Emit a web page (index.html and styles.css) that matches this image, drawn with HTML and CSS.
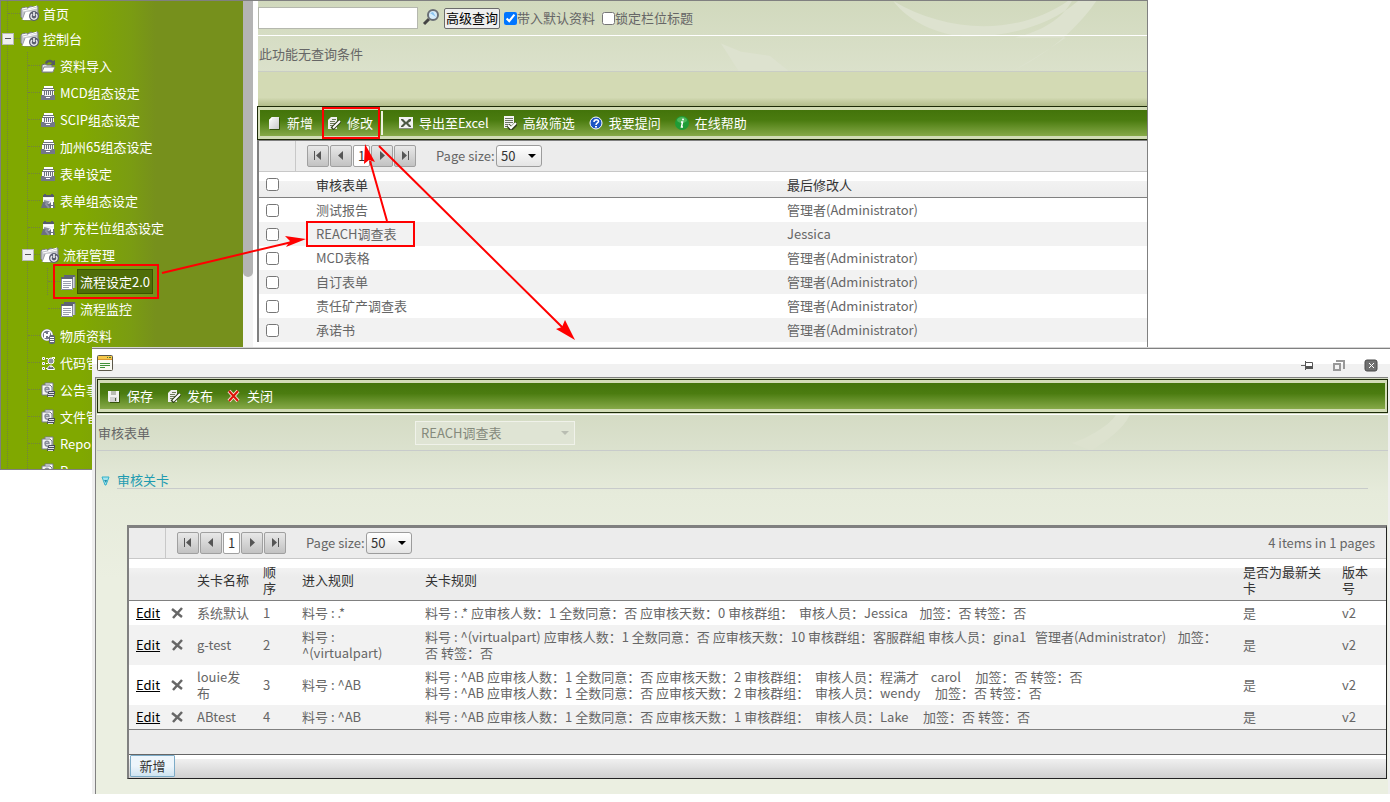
FILE: index.html
```html
<!DOCTYPE html>
<html lang="zh-CN">
<head>
<meta charset="utf-8">
<title>流程设定2.0</title>
<link rel="stylesheet" href="styles.css">
</head>
<body>
<svg class="defs" aria-hidden="true">
  <defs>
    <linearGradient id="paper" x1="0" y1="0" x2="1" y2="1"><stop offset="0" stop-color="#fff"/><stop offset="1" stop-color="#c9c9c9"/></linearGradient>
    <symbol id="i-folder" viewBox="0 0 20 18">
      <path d="M1 5l1-1 4-1 1 1 4-2 2 1 5-1v6l1 3-6 5H4L1 13z" fill="#c3c5cb" stroke="#7c8089" stroke-width="1"/>
      <path d="M2 5l5-1M8 5l9-3M3 7l14-3" stroke="#fff" fill="none"/>
      <path d="M2 16l3-8 12-1-2 9z" fill="#fff"/>
      <path d="M2 16l3-8" stroke="#9a9da5"/>
      <circle cx="14" cy="12" r="5" fill="#5b5f70"/><path d="M12 10a3 3 0 1 0 4 0" fill="none" stroke="#e8e8ee" stroke-width="1.500"/><path d="M14 8v4" stroke="#fff" stroke-width="1.500"/>
    </symbol>
    <symbol id="i-import" viewBox="0 0 16 16">
      <path d="M2 7l3-1 2 1h5v7H2z" fill="#dfe2e6" stroke="#6c6f75"/>
      <path d="M2 14l2-5h11l-2 5z" fill="#fff" stroke="#83868b"/>
      <path d="M5 5c1-4 6-4 8-2l2-1v5h-5l2-2c-2-1-4-1-5 1z" fill="#555a64"/>
    </symbol>
    <symbol id="i-form" viewBox="0 0 16 16">
      <path d="M4 1h9v2H4zM3 4h11v1H3z" fill="#fff"/><path d="M3 3h11v1H3zM2 5h13v1H2z" fill="#6d7180"/><path d="M2 6h12v5H2z" fill="#f7f7f7"/>
      <path d="M4.500 6v4M6.500 6v4M8.500 6v4M10.500 6v4M12.500 6v4" stroke="#6d7180"/><path d="M1 10h3l1 1h6l1-1h3v5H1z" fill="#73778a"/><path d="M6 12h4v1H6z" fill="#fff"/>
    </symbol>
    <symbol id="i-formedit" viewBox="0 0 16 16">
      <path d="M3 3h11v8H3z" fill="#f2f2f4"/><path d="M3 3h11" stroke="#565b6b" stroke-width="2"/><path d="M5 1v2M12 1v2" stroke="#565b6b" stroke-width="2"/><path d="M4 5h9v1H4z" fill="#fff"/>
      <path d="M1 15l2-6h3l3 2 2-2h3l1 6z" fill="#6b6f82"/><path d="M4 8l4 1-2 2 3 4" fill="none" stroke="#8e92a2" stroke-width="2"/><path d="M12 8v4M12 13v2" stroke="#fff" stroke-width="2"/>
    </symbol>
    <symbol id="i-list" viewBox="0 0 16 16">
      <path d="M4 1h11v13H4z" fill="#d5d7de"/><path d="M4 1h11v2H4z" fill="#5f6474"/><path d="M15 2v12" stroke="#7c8090"/>
      <path d="M1 4h12v12H1z" fill="#fff"/><path d="M1 3h12v2H1z" fill="#5f6474"/><path d="M1.500 5v10.500h11V5" fill="none" stroke="#85899a"/><path d="M3 7.500h8M3 9.500h8M3 11.500h8M3 13.500h6" stroke="#9a9eab"/>
    </symbol>
    <symbol id="i-material" viewBox="0 0 16 16">
      <circle cx="7" cy="7" r="6" fill="#73778a"/><circle cx="7" cy="7" r="5" fill="none" stroke="#fff" stroke-width="1.500"/><path d="M5 5v5M9 4v5M5 7h4" stroke="#fff" stroke-width="2"/>
      <rect x="9" y="7" width="6" height="9" rx="2" fill="#62677a"/><path d="M10 9.500h4M10 11.500h4M10 13.500h4" stroke="#fff"/>
    </symbol>
    <symbol id="i-code" viewBox="0 0 16 16">
      <path d="M2.500 2.500h2v2h-2zM2.500 7.500h2v2h-2zM2.500 12.500h2v2h-2z" fill="#62677a" stroke="#fff"/><path d="M6 3.500h2M6 8.500h2M6 13.500h1M14.500 2v2M12 2.500h3" stroke="#fff" fill="none"/>
      <circle cx="11" cy="6" r="3" fill="#8b8fa0" stroke="#fff"/><path d="M7.500 14.500c0-5 6-5 7 0z" fill="#62677a" stroke="#fff"/><path d="M10 11l1 2 1-2" fill="#fff"/>
    </symbol>
    <symbol id="i-docs" viewBox="0 0 16 16">
      <path d="M5 1h8v9H5z" fill="#fff" stroke="#777b89"/><path d="M2 3h8l2 2v8H2z" fill="#f6f6f6" stroke="#777b89"/><path d="M5 7.500h4c0-3-4-3-4 0 0 3 3 3 4 2" fill="none" stroke="#8a8e9c" stroke-width="1.500"/>
      <path d="M8 10l1-1h6v2l-1 4H7z" fill="#4a4e5e"/><path d="M9 10.500h5M8 12.500h6M8 14.500h5" stroke="#dfe0e5"/>
    </symbol>
    <symbol id="i-new" viewBox="0 0 14 14"><path d="M5 1h7v12H2V4z" fill="url(#paper)"/><path d="M2 4h3V1" fill="#fff"/><path d="M12.500 2v11.500H3" fill="none" stroke="#34510c"/></symbol>
    <symbol id="i-edit" viewBox="0 0 14 14">
      <path d="M4 1h6v12H1V4z" fill="#efefef"/><path d="M3 5.500h5M3 7.500h5M3 9.500h3M5 3.500h4" stroke="#6d7b58"/><path d="M5 13l8-8" stroke="#33431c" stroke-width="4"/><path d="M6 12l7-7" stroke="#fff" stroke-width="2"/>
    </symbol>
    <symbol id="i-excel" viewBox="0 0 14 14"><path d="M0 1h14v12H0z" fill="#f2f2f2"/><path d="M2 3h2l3 3 3-3h2v2L9 7l3 3v1h-2L7 8l-3 3H2v-1l3-3-3-3z" fill="#4d5945"/><path d="M0 12.500h14" stroke="#8a8f84"/></symbol>
    <symbol id="i-filter" viewBox="0 0 14 14"><path d="M1 0h10v12H1z" fill="#f3f3f3"/><path d="M2 2.500h8M2 4.500h8M2 6.500h8M2 8.500h4M2 10.500h3" stroke="#6c7562"/><path d="M5 9l3 4 6-6" fill="none" stroke="#33431c" stroke-width="4"/><path d="M5 9l3 3 5-5" fill="none" stroke="#fff" stroke-width="2"/></symbol>
    <symbol id="i-help" viewBox="0 0 14 14"><circle cx="7" cy="7" r="6" fill="#1d56c4" stroke="#fff" stroke-width="1"/><path d="M5 6c0-3 4.500-3 4.500-.5C9.500 7 7 7 7 9" fill="none" stroke="#fff" stroke-width="1.500"/><path d="M6 10h2v1.500H6z" fill="#fff"/></symbol>
    <symbol id="i-info" viewBox="0 0 14 14"><circle cx="7" cy="7" r="7" fill="#1f9c36"/><ellipse cx="7" cy="4" rx="5" ry="3" fill="#4db75a"/><path d="M6 6h1.500l-1 5H8" fill="none" stroke="#fff" stroke-width="1.500"/><circle cx="8" cy="3.500" r="1" fill="#fff"/></symbol>
    <symbol id="i-save" viewBox="0 0 14 14"><path d="M1 2h11v11H2l-1-1z" fill="#f1f1f1"/><path d="M4 2h5v4H4z" fill="#b9bcb4"/><path d="M3 8h7v5H3z" fill="#d2d2d2"/><path d="M8 9h1v3H8z" fill="#4e5b3c"/><path d="M12.500 3v10.500H3" fill="none" stroke="#34510c"/></symbol>
    <symbol id="i-redx" viewBox="0 0 14 14"><path d="M2 2l9 10M11 2L2 12" stroke="#f6e3d8" stroke-width="4"/><path d="M2 2l9 10M11 2L2 12" stroke="#dd1408" stroke-width="2"/></symbol>
    <symbol id="i-first" viewBox="0 0 20 20"><path d="M6 5h1v9H6zM13 5v9L8 9.500z" fill="#555"/></symbol>
    <symbol id="i-prev" viewBox="0 0 20 20"><path d="M12 5v9L7 9.500z" fill="#555"/></symbol>
    <symbol id="i-next" viewBox="0 0 20 20"><path d="M8 5v9l5-4.500z" fill="#555"/></symbol>
    <symbol id="i-last" viewBox="0 0 20 20"><path d="M13 5h1v9h-1zM7 5v9l5-4.500z" fill="#555"/></symbol>
    <symbol id="i-del" viewBox="0 0 14 14"><path d="M2 3l10 8M12 2L3 12" stroke="#676767" stroke-width="2.500"/></symbol>
    <symbol id="i-down" viewBox="0 0 8 4"><path d="M0 0h8L4 4z"/></symbol>
  </defs>
</svg>

<div class="desktop">
  <div class="app">
    <nav class="sidebar">
      <ul class="tree">
        <li><a class="node" href="#"><i class="dash root"></i><svg class="folder"><use href="#i-folder"/></svg><span>首页</span></a></li>
        <li>
          <div class="node open"><button class="toggle" type="button" aria-label="折叠"></button><i class="dash"></i><svg class="folder"><use href="#i-folder"/></svg><span>控制台</span></div>
          <ul class="branch">
            <li><a class="node" href="#"><i class="dash"></i><svg><use href="#i-import"/></svg><span>资料导入</span></a></li>
            <li><a class="node" href="#"><i class="dash"></i><svg><use href="#i-form"/></svg><span>MCD组态设定</span></a></li>
            <li><a class="node" href="#"><i class="dash"></i><svg><use href="#i-form"/></svg><span>SCIP组态设定</span></a></li>
            <li><a class="node" href="#"><i class="dash"></i><svg><use href="#i-form"/></svg><span>加州65组态设定</span></a></li>
            <li><a class="node" href="#"><i class="dash"></i><svg><use href="#i-form"/></svg><span>表单设定</span></a></li>
            <li><a class="node" href="#"><i class="dash"></i><svg><use href="#i-formedit"/></svg><span>表单组态设定</span></a></li>
            <li><a class="node" href="#"><i class="dash"></i><svg><use href="#i-formedit"/></svg><span>扩充栏位组态设定</span></a></li>
            <li>
              <div class="node open"><button class="toggle" type="button" aria-label="折叠"></button><i class="dash"></i><svg class="folder"><use href="#i-folder"/></svg><span>流程管理</span></div>
              <ul class="twig">
                <li><a class="node" href="#"><i class="dash"></i><svg><use href="#i-list"/></svg><span class="selected">流程设定2.0</span></a></li>
                <li><a class="node" href="#"><i class="dash"></i><svg><use href="#i-list"/></svg><span>流程监控</span></a></li>
              </ul>
            </li>
            <li><a class="node" href="#"><i class="dash"></i><svg><use href="#i-material"/></svg><span>物质资料</span></a></li>
            <li><a class="node" href="#"><i class="dash"></i><svg><use href="#i-code"/></svg><span>代码管理</span></a></li>
            <li><a class="node" href="#"><i class="dash"></i><svg><use href="#i-docs"/></svg><span>公告事项</span></a></li>
            <li><a class="node" href="#"><i class="dash"></i><svg><use href="#i-docs"/></svg><span>文件管理</span></a></li>
            <li><a class="node" href="#"><i class="dash"></i><svg><use href="#i-docs"/></svg><span>Report</span></a></li>
            <li><a class="node" href="#"><i class="dash"></i><svg><use href="#i-docs"/></svg><span>Report</span></a></li>
          </ul>
        </li>
      </ul>
    </nav>
    <div class="scrollbar"><div class="thumb"></div></div>
    <main class="main">
      <div class="query">
        <svg class="swoosh" viewBox="0 0 890 70" preserveAspectRatio="xMaxYMin slice" aria-hidden="true">
          <path d="M640 0C690 30 760 36 812 0h10C790 28 740 38 700 34 670 28 650 14 640 0zM756 70c40-20 66-44 84-70h-24c-10 18-30 30-56 36h50c-20 14-40 26-54 34zM470 42l20 8 28 4 20 16h-50z" fill="#dde2cf"/>
        </svg>
        <form class="search">
          <input class="keyword" type="text" aria-label="查询">
          <button class="lens" type="button" aria-label="搜索"><svg viewBox="0 0 18 18"><path d="M2 15l5-5" stroke="#444" stroke-width="3"/><circle cx="11" cy="6" r="5" fill="#d6ecfa" stroke="#6a6f75" stroke-width="2"/><path d="M8 4l3-1 3 5z" fill="#8ac4ef"/></svg></button>
          <button class="advanced" type="button">高级查询</button>
          <label><input type="checkbox" checked>带入默认资料</label>
          <label><input type="checkbox">锁定栏位标题</label>
        </form>
        <p class="notice">此功能无查询条件</p>
      </div>
      <div class="band"></div>
      <div class="toolbar">
        <div class="tools">
          <button type="button"><svg><use href="#i-new"/></svg>新增</button>
          <button type="button"><svg><use href="#i-edit"/></svg>修改</button>
          <i class="sep"></i>
          <button type="button"><svg><use href="#i-excel"/></svg>导出至Excel</button>
          <button type="button"><svg><use href="#i-filter"/></svg>高级筛选</button>
          <button type="button"><svg><use href="#i-help"/></svg>我要提问</button>
          <button type="button"><svg><use href="#i-info"/></svg>在线帮助</button>
        </div>
      </div>
      <section class="grid">
        <div class="pager">
          <div class="corner"></div>
          <div class="pages">
            <button type="button" aria-label="第一页"><svg><use href="#i-first"/></svg></button>
            <button type="button" aria-label="上一页"><svg><use href="#i-prev"/></svg></button>
            <button type="button" class="current">1</button>
            <button type="button" aria-label="下一页"><svg><use href="#i-next"/></svg></button>
            <button type="button" aria-label="最后一页"><svg><use href="#i-last"/></svg></button>
          </div>
          <label for="size1">Page size:</label>
          <div class="select"><select id="size1"><option>50</option></select><svg><use href="#i-down"/></svg></div>
        </div>
        <table class="forms">
          <colgroup><col class="c-check"><col class="c-form"><col></colgroup>
          <thead><tr><th><input type="checkbox" aria-label="全选"></th><th>审核表单</th><th>最后修改人</th></tr></thead>
          <tbody>
            <tr><td><input type="checkbox" aria-label="测试报告"></td><td>测试报告</td><td>管理者(Administrator)</td></tr>
            <tr><td><input type="checkbox" aria-label="REACH调查表"></td><td>REACH调查表</td><td>Jessica</td></tr>
            <tr><td><input type="checkbox" aria-label="MCD表格"></td><td>MCD表格</td><td>管理者(Administrator)</td></tr>
            <tr><td><input type="checkbox" aria-label="自订表单"></td><td>自订表单</td><td>管理者(Administrator)</td></tr>
            <tr><td><input type="checkbox" aria-label="责任矿产调查表"></td><td>责任矿产调查表</td><td>管理者(Administrator)</td></tr>
            <tr><td><input type="checkbox" aria-label="承诺书"></td><td>承诺书</td><td>管理者(Administrator)</td></tr>
          </tbody>
        </table>
      </section>
    </main>
  </div>

  <section class="dialog">
    <header class="titlebar">
      <svg class="appicon" viewBox="0 0 16 16"><rect x="0.500" y="0.500" width="15" height="15" rx="1" fill="#fafaf4" stroke="#5c584a"/><path d="M1 1h14v4H1z" fill="#f6c749"/><path d="M1 4.500h14" stroke="#d9962c"/><path d="M10 2.500h1M12 2.500h2" stroke="#4e7b2e"/><path d="M3 8.500h10M3 10.500h10M3 12.500h5" stroke="#3f9138"/></svg>
      <div class="winbtns">
        <button type="button" aria-label="固定"><svg viewBox="0 0 14 14"><path d="M1 6.500h4" stroke="#666"/><path d="M5.500 2v9" stroke="#555"/><path d="M5.500 3.500h7v6h-7z" fill="#fff" stroke="#555"/><path d="M6 7h7v3H6z" fill="#555"/></svg></button>
        <button type="button" aria-label="还原"><svg viewBox="0 0 14 14"><path d="M4 2h8v8" fill="none" stroke="#999" stroke-width="2"/><path d="M2 5h6v6H2z" fill="#f4f4f4" stroke="#999" stroke-width="2"/></svg></button>
        <button type="button" aria-label="关闭"><svg viewBox="0 0 14 14"><rect x="1" y="1" width="12" height="11" rx="2" fill="#707070" stroke="#4a4a4a"/><path d="M5 4l5 5M10 4L5 9" stroke="#fff"/></svg></button>
      </div>
    </header>
    <div class="pane">
      <div class="toolbar">
        <div class="tools">
          <button type="button"><svg><use href="#i-save"/></svg>保存</button>
          <button type="button"><svg><use href="#i-edit"/></svg>发布</button>
          <button type="button"><svg><use href="#i-redx"/></svg>关闭</button>
        </div>
      </div>
      <div class="field">
        <svg class="swoosh" viewBox="0 0 1290 36" preserveAspectRatio="xMaxYMin slice" aria-hidden="true"><path d="M994 36c16-12 30-20 38-36h-14c-8 12-30 24-44 28z" fill="#dde2cf"/></svg>
        <label for="form">审核表单</label>
        <div class="select wide"><select id="form" disabled><option>REACH调查表</option></select><svg><use href="#i-down"/></svg></div>
      </div>
      <div class="stage">
        <h2><svg viewBox="0 0 9 10"><path d="M1 1h7L5 9H4z" fill="#a5e4ee" stroke="#35b1c9"/><path d="M3 4h3L5 7z" fill="#1f8da8"/></svg><span>审核关卡</span></h2>
        <section class="grid steps">
          <div class="pager">
            <div class="corner"></div>
            <div class="pages">
              <button type="button" aria-label="第一页"><svg><use href="#i-first"/></svg></button>
              <button type="button" aria-label="上一页"><svg><use href="#i-prev"/></svg></button>
              <button type="button" class="current">1</button>
              <button type="button" aria-label="下一页"><svg><use href="#i-next"/></svg></button>
              <button type="button" aria-label="最后一页"><svg><use href="#i-last"/></svg></button>
            </div>
            <label for="size2">Page size:</label>
            <div class="select"><select id="size2"><option>50</option></select><svg><use href="#i-down"/></svg></div>
            <span class="count">4 items in 1 pages</span>
          </div>
          <table>
            <colgroup><col class="c-edit"><col class="c-del"><col class="c-name"><col class="c-order"><col class="c-enter"><col><col class="c-latest"><col class="c-ver"></colgroup>
            <thead><tr><th></th><th></th><th>关卡名称</th><th>顺<br>序</th><th>进入规则</th><th>关卡规则</th><th>是否为最新关<br>卡</th><th>版本<br>号</th></tr></thead>
            <tbody>
              <tr><td><a href="#">Edit</a></td><td><button class="del" type="button" aria-label="删除"><svg><use href="#i-del"/></svg></button></td><td>系统默认</td><td>1</td><td>料号 : .*</td><td>料号 : .* 应审核人数：1 全数同意：否 应审核天数：0 审核群组：&nbsp; 审核人员：Jessica &nbsp;&nbsp; 加签：否 转签：否</td><td>是</td><td>v2</td></tr>
              <tr><td><a href="#">Edit</a></td><td><button class="del" type="button" aria-label="删除"><svg><use href="#i-del"/></svg></button></td><td>g-test</td><td>2</td><td>料号 :<br>^(virtualpart)</td><td>料号 : ^(virtualpart) 应审核人数：1 全数同意：否 应审核天数：10 审核群组：客服群組 审核人员：gina1 &nbsp; 管理者(Administrator) &nbsp;&nbsp; 加签：<br>否 转签：否</td><td>是</td><td>v2</td></tr>
              <tr><td><a href="#">Edit</a></td><td><button class="del" type="button" aria-label="删除"><svg><use href="#i-del"/></svg></button></td><td>louie发<br>布</td><td>3</td><td>料号 : ^AB</td><td>料号 : ^AB 应审核人数：1 全数同意：否 应审核天数：2 审核群组：&nbsp; 审核人员：程满才 &nbsp;&nbsp; carol &nbsp;&nbsp;&nbsp; 加签：否 转签：否<br>料号 : ^AB 应审核人数：1 全数同意：否 应审核天数：2 审核群组：&nbsp; 审核人员：wendy &nbsp;&nbsp;&nbsp; 加签：否 转签：否</td><td>是</td><td>v2</td></tr>
              <tr><td><a href="#">Edit</a></td><td><button class="del" type="button" aria-label="删除"><svg><use href="#i-del"/></svg></button></td><td>ABtest</td><td>4</td><td>料号 : ^AB</td><td>料号 : ^AB 应审核人数：1 全数同意：否 应审核天数：1 审核群组：&nbsp; 审核人员：Lake &nbsp;&nbsp;&nbsp; 加签：否 转签：否</td><td>是</td><td>v2</td></tr>
            </tbody>
          </table>
          <div class="gridfoot"></div>
          <div class="commands"><button type="button">新增</button></div>
        </section>
      </div>
    </div>
  </section>

  <svg class="marks" width="1390" height="802" aria-hidden="true">
    <g fill="none" stroke="#f00" stroke-width="2">
      <rect x="54" y="265" width="104" height="33"/>
      <rect x="323" y="108" width="56" height="30"/>
      <rect x="307" y="222" width="107" height="24"/>
      <path d="M162 273l130-31M387 221l-17-60M379 146l184 182"/>
    </g>
    <path d="M306 239l-20 8 4-6-5-5zM365 144l10 18-6-2-5 4zM575 340l-19-11 6-2 3-7z" fill="#f00"/>
  </svg>
</div>
</body>
</html>
```
FILE: styles.css
```css
* { box-sizing: border-box; }
body {
  margin: 0;
  background: #fff;
  color: #666;
  font: 13px/16px "Noto Sans CJK SC", "Open Sans", sans-serif;
}
button, input, select { font: inherit; color: inherit; margin: 0; }
button { border: 0; padding: 0; background: none; }
svg { display: block; flex: none; }
ul, p, h2 { margin: 0; padding: 0; list-style: none; font-size: 13px; font-weight: 400; }
a { color: inherit; text-decoration: none; }
.defs { position: absolute; width: 0; height: 0; }
.desktop { position: relative; min-height: 100vh; overflow: hidden; }

.app { display: flex; align-items: flex-start; height: 470px; padding-right: 242px; }
.sidebar {
  flex: none;
  width: 243px;
  height: 470px;
  overflow: hidden;
  border: 1px solid #808080;
  border-right: 0;
  background: linear-gradient(90deg, #80a800 80px, #7a9c12 130px, #76901c 155px);
  color: #fff;
}
.tree { background: linear-gradient(#73823f 50%, transparent 50%) 6px 10px / 1px 2px repeat-y; }
.tree > li:first-child > .node { height: 24px; }
.branch { background: linear-gradient(#73823f 50%, transparent 50%) 26px 0 / 1px 2px repeat-y; }
.twig > li:first-child { background: linear-gradient(#73823f 50%, transparent 50%) 46px 0 / 1px 2px repeat-y; }
.node { display: flex; align-items: center; height: 27px; padding-left: 7px; }
.node.open { padding-left: 1px; }
.branch .node { padding-left: 27px; }
.branch .node.open { padding-left: 21px; }
.twig .node { padding-left: 47px; }
.node svg { width: 16px; height: 16px; }
.node svg.folder { width: 20px; height: 18px; }
.node span { padding: 0 4px; line-height: 23px; white-space: nowrap; }
.folder + span { padding: 0 3px; }
.node .selected { margin-left: 1px; background: #4f6d08; border: 1px solid #3c5400; padding: 0 2px; }
.dash { width: 12px; border-top: 1px dotted #73823f; }
.open .dash { width: 6px; }
.toggle { width: 12px; height: 12px; border: 1px solid #b8b8b8; background: linear-gradient(#555, #555) center / 6px 1px no-repeat, #efefef; }
.scrollbar { flex: none; width: 14px; height: 348px; border-top: 1px solid #808080; background: linear-gradient(90deg, #f4f4f4 10px, #fff 10px); }
.thumb { width: 10px; height: 276px; border-radius: 0 0 5px 5px; background: #b4b4b4; }

.main { flex: 1; min-width: 0; height: 348px; overflow: hidden; border-top: 1px solid #808080; border-right: 1px solid #808080; }
.query { position: relative; margin-left: 1px; background: linear-gradient(#d1d9bd, #dbe1cb); }
.swoosh { position: absolute; left: 0; top: 0; width: 100%; height: 100%; }
.search { position: relative; display: flex; align-items: center; height: 35px; border-bottom: 1px solid #fff; }
.search label { display: flex; align-items: center; margin-right: 7px; }
.keyword { width: 160px; height: 22px; border: 1px solid #b5b8ae; background: #fff; }
.lens { margin: 0 4px; }
.lens svg { width: 18px; height: 18px; }
.advanced { height: 21px; padding: 0 1px; margin-right: 4px; border: 1px solid #6b6b6b; border-radius: 2px; background: #efefef; color: #000; }
input[type="checkbox"] { display: block; width: 13px; height: 13px; }
.notice { position: relative; height: 36px; padding-left: 1px; line-height: 35px; border-bottom: 1px solid #c9cdc5; }
.band { height: 34px; margin-left: 1px; background: linear-gradient(#d3dab4 75%, #b2bd8b); }

.toolbar { padding: 3px 2px; border: 1px solid #1c2a08; background: #d2dcb6; }
.main .toolbar { border-right: 0; padding-right: 0; }
.tools { display: flex; align-items: center; height: 26px; padding-left: 7px; gap: 14px; background: linear-gradient(#43740a, #4b7c10 40%, #86a948); color: #fff; }
.tools button { display: flex; align-items: center; gap: 6px; white-space: nowrap; }
.tools svg { width: 14px; height: 14px; }
.sep { width: 2px; height: 24px; margin: 0 2px 0 -6px; background: #eef2e0; }

.grid { border-left: 2px solid #808080; border-top: 1px solid #808080; background: #fff; }
.pager { display: flex; align-items: center; height: 31px; border-bottom: 1px solid #c8c8c8; background: #ececec; }
.corner { align-self: stretch; width: 37px; border-right: 1px solid #c8c8c8; }
.pages { display: flex; gap: 1px; margin: 0 20px 0 11px; }
.pages button { width: 22px; height: 22px; border: 1px solid #a0a0a0; border-radius: 2px; background: linear-gradient(#e8e8e8, #c2c2c2); }
.pages svg { width: 20px; height: 20px; }
.pages .current { width: 17px; background: #fff; color: #333; }
.pager label { width: 60px; white-space: nowrap; }
.select { position: relative; width: 46px; }
.select select { display: block; width: 100%; height: 22px; padding: 0 4px; border: 1px solid #9c9c9c; border-radius: 3px; background: linear-gradient(#fff, #e4e4e4); color: #333; appearance: none; }
.select svg { position: absolute; right: 6px; top: 9px; width: 8px; height: 4px; pointer-events: none; }
.count { margin-left: auto; padding-right: 11px; }

table { width: 100%; border-collapse: separate; border-spacing: 0; table-layout: fixed; }
th, td { padding: 4px 7px; text-align: left; font-weight: 400; vertical-align: middle; white-space: nowrap; }
th { height: 26px; color: #333; border-bottom: 1px solid #808080; background: linear-gradient(#fff 9px, #f2f2f2 9px, #ececec); }
tbody tr:nth-child(even) { background: #f2f2f2; }
.c-check { width: 50px; }
.c-form { width: 471px; }
td a { color: #000; text-decoration: underline; }

.dialog { position: absolute; left: 92px; right: 0; top: 347px; border-top: 1px solid #d5d5d5; background: #efefef; }
.titlebar { display: flex; align-items: center; justify-content: space-between; height: 29px; padding: 0 12px 0 5px; border-top: 1px solid #808080; background: linear-gradient(#fff 15px, #f1f1f1 15px); }
.appicon { width: 16px; height: 16px; }
.winbtns { display: flex; gap: 18px; padding-top: 5px; }
.winbtns svg { width: 14px; height: 14px; }
.pane { margin: 0 2px 0 3px; padding: 1px 0 0 1px; border-top: 1px solid #808080; border-left: 1px solid #808080; background: linear-gradient(#d3dac2 30px, #dce2cf 75px, #e6ebdb 115px, #ebefe1 200px); }
.field { position: relative; display: flex; align-items: center; height: 37px; margin-top: 1px; padding-left: 1px; border-top: 1px solid #fff; border-bottom: 1px solid #c8cbcb; }
.field label { position: relative; width: 317px; }
.select.wide { width: 160px; }
.select.wide select { height: 24px; padding: 0 5px; border: 1px solid #f0f2ea; border-radius: 0; background: #dfe4d4; color: #858a7c; opacity: 1; }
.select.wide svg { top: 10px; fill: #b9bdb2; }
.stage { padding: 21px 0 15px 4px; }
.stage h2 { display: flex; align-items: center; gap: 7px; margin-right: 20px; color: #1f9bb0; }
.stage h2 svg { width: 9px; height: 10px; }
.stage h2 span { flex: 1; border-bottom: 1px solid #c8cbcb; }
.steps { margin: 36px 1px 0 26px; border-top-width: 3px; border-right: 1px solid #222; border-bottom: 1px solid #222; }
.steps th { height: 42px; background: linear-gradient(#fff 9px, #f2f2f2 9px, #ececec 18px); }
.steps tbody tr:last-child td { border-bottom: 1px solid #808080; }
.c-edit { width: 36px; }
.c-del { width: 25px; }
.c-name { width: 66px; }
.c-order { width: 39px; }
.c-enter { width: 123px; }
.c-latest { width: 99px; }
.c-ver { width: 51px; }
td:has(.del) { padding: 0 5px; }
.del { display: block; }
.del svg { width: 14px; height: 14px; }
.gridfoot { height: 25px; border-bottom: 1px solid #666; background: #ececec; }
.commands { height: 23px; padding-left: 1px; background: linear-gradient(#fff 4px, #f0f0f0 4px, #d0d0d0); }
.commands button { width: 45px; height: 22px; border: 1px solid #7cabc7; border-radius: 1px; background: linear-gradient(#edf5fb 50%, #cfe4f1); color: #333; }

.marks { position: absolute; left: 0; top: 0; pointer-events: none; }
```
